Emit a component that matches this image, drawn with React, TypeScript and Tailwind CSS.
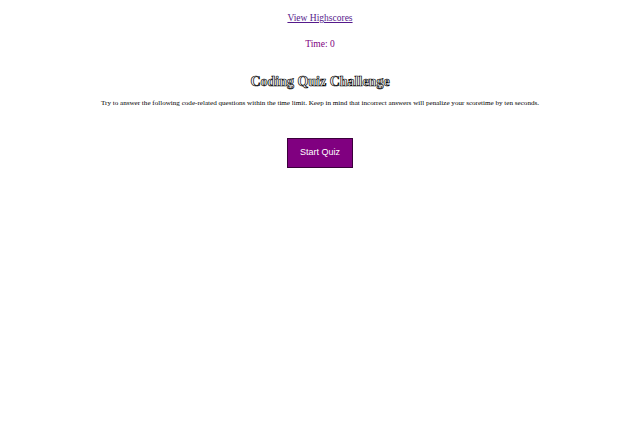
import React from 'react';

const App: React.FC = () => {
  return (
    <div className="min-h-screen w-full bg-white font-['Liberation_Serif',serif] text-black">
      <header className="flex flex-col items-center pt-[12px]">
        <a href="#" className="text-[9.5px] leading-[12px] text-[#551a8b] underline">
          View Highscores
        </a>
        <p className="mt-[14px] text-[9.5px] leading-[12px] text-[#800080]">Time: 0</p>
      </header>

      <main className="flex flex-col items-center">
        <h1 className="mt-[23px] text-[14px] leading-[18px] font-bold text-white [-webkit-text-stroke:0.7px_black]">
          Coding Quiz Challenge
        </h1>
        <p className="mt-[7px] text-[7.1px] leading-[10px]">
          Try to answer the following code-related questions within the time limit. Keep in mind that incorrect answers will penalize your scoretime by ten seconds.
        </p>
        <button className="mt-[30px] w-[66px] h-[30px] bg-[#800080] border border-[#3a003a] text-white text-[9px] font-['Liberation_Sans',sans-serif]">
          Start Quiz
        </button>
      </main>
    </div>
  );
};

export default App;
